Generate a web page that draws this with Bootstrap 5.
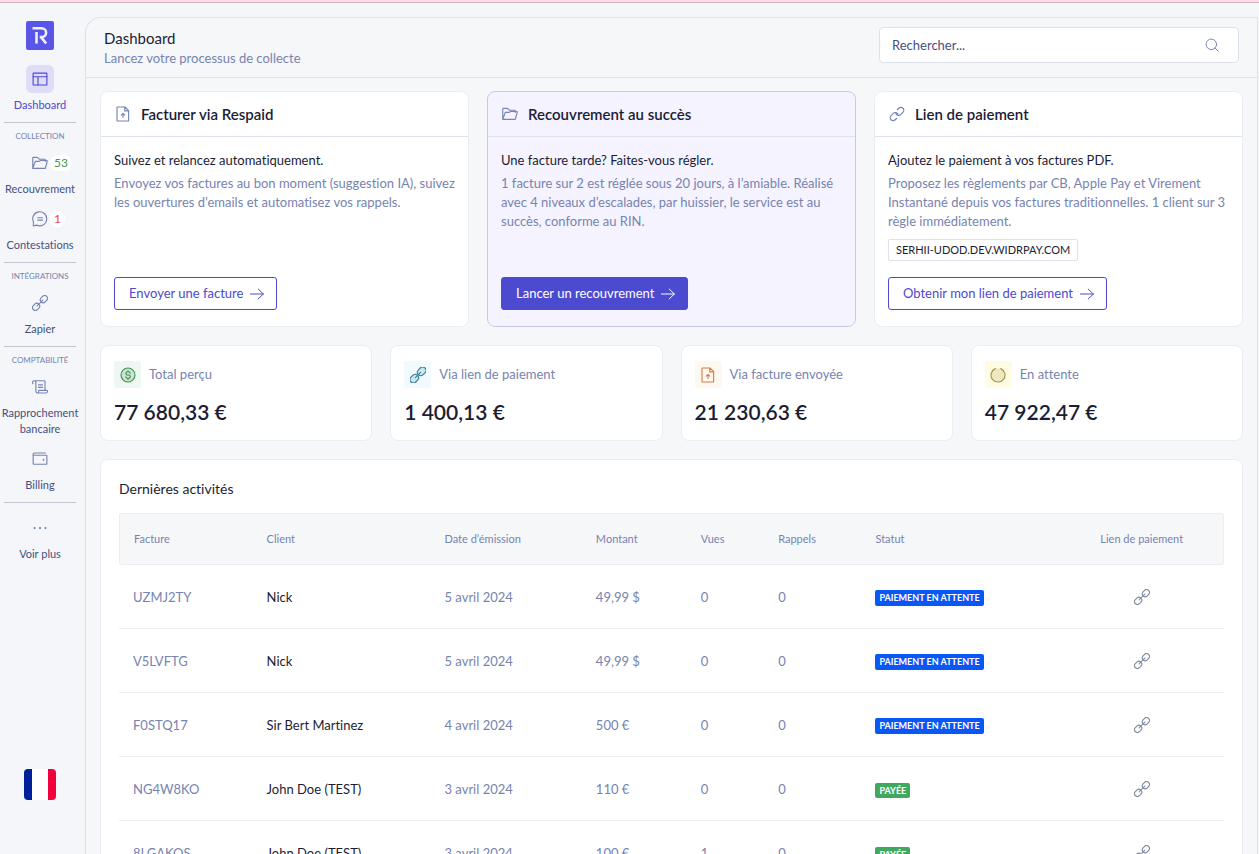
<!DOCTYPE html>
<html lang="fr">
<head>
<meta charset="utf-8">
<meta name="viewport" content="width=device-width, initial-scale=1">
<title>Dashboard</title>
<link href="https://cdn.jsdelivr.net/npm/bootstrap@5.3.0/dist/css/bootstrap.min.css" rel="stylesheet">
<style>
:root { --ink:#1c1d35; --muted:#7783b0; --slate:#46507f; --brand:#4c4acf; --line:#dfe1ed; --soft:#ebedf5; --canvas:#f6f7f9; }
body { font-family:Lato,"Liberation Sans",sans-serif; font-size:13px; line-height:19px; font-variant-ligatures:none; color:var(--ink); background:#f4f6fa; }
a { text-decoration:none; }
.ico { width:16px; height:16px; flex:none; fill:none; stroke:currentColor; stroke-width:18; stroke-linecap:round; stroke-linejoin:round; }
.ico-sm { width:14px; height:14px; }
.top-strip { height:3px; background:#ffdfe7; border-bottom:1px solid #d2b1bd; }
.side { width:80px; height:calc(100vh - 3px); padding:18px 0 54px; flex:none; top:0; }
.brand-mark { width:28px; height:29px; margin-bottom:15px; }
.side .nav-item + .nav-item { margin-top:8px; }
.side .nav-link { padding:0; font-size:11px; line-height:16px; color:var(--slate); text-align:center; }
.side .nav-link.active { color:var(--brand); }
.side-icon { height:28px; margin-bottom:4px; color:var(--muted); position:relative; }
.active .side-icon { width:28px; margin-left:auto; margin-right:auto; border-radius:6px; background:#dfdcf8; color:var(--brand); }
.side hr { margin:9px 4px 7px; border-top:1px solid #c3c7d3; opacity:1; }
.side-title { font-size:8px; line-height:12px; color:var(--muted); text-align:center; margin-bottom:7px; text-transform:uppercase; }
.count { position:absolute; left:50px; top:6px; padding:0 4px; border-radius:8px; background:#fff; font-size:12px; line-height:16px; color:#419b4a; }
.count.alert-count { color:#ec4154; }
.flag { width:32px; height:31px; border-radius:4px; border:0; padding:0; background:linear-gradient(90deg,#00209a 0 25%,#fff 25% 75%,#f0003c 75%); }
.shell { margin:14px 1px 0 5px; border:1px solid var(--line); border-bottom:0; border-radius:16px 0 0 0; background:var(--canvas); min-width:0; }
.page-head { padding:9px 18px 9px; border-bottom:1px solid var(--line); }
.page-head > * { margin-bottom:5px; }
.page-head h1 { font-size:15px; line-height:22px; margin:0; font-weight:400; }
.page-head p { margin:0; color:var(--muted); }
.search { width:360px; height:36px; border:1px solid var(--line); border-radius:4px; background:#fff; padding:0 19px 0 12px; color:var(--muted); }
.search input { border:0; outline:0; flex:1; min-width:0; font-size:13px; color:var(--slate); padding:0; }
.search input::placeholder { color:var(--slate); opacity:1; }
.content { padding:13px 14px; }
.grid-gap { --bs-gutter-x:18px; --bs-gutter-y:18px; margin-bottom:18px; }
.panel { background:#fff; border:1px solid var(--soft); border-radius:8px; }
.panel.featured { background:#f5f3ff; border-color:#cac7ef; }
.panel-title { height:45px; padding:0 14px; border-bottom:1px solid var(--line); color:var(--muted); gap:10px; }
.panel-title h2 { font-size:15px; line-height:22px; font-weight:600; color:var(--ink); margin:0; }
.panel-text { padding:14px 6px 16px 13px; }
.panel-text p { margin:0 0 4px; }
.panel-text .muted { color:var(--muted); margin-bottom:8px; }
.url-tag { border:1px solid var(--line); border-radius:2px; font-size:11px; line-height:20px; padding:0 7px; margin-bottom:16px; }
.btn.cta { --bs-btn-font-size:13px; --bs-btn-line-height:19px; --bs-btn-padding-y:6px; padding-left:14px; padding-right:12px; --bs-btn-border-radius:3px; --bs-btn-color:var(--brand); --bs-btn-border-color:var(--brand); --bs-btn-hover-bg:#eeedfb; --bs-btn-hover-color:var(--brand); gap:7px; }
.btn.cta-solid { --bs-btn-bg:var(--brand); --bs-btn-color:#fff; }
.stat { padding:15px 13px 14px; }
.stat-icon { width:27px; height:27px; border-radius:3px; }
.stat-label { color:var(--muted); }
.stat-value { font-size:21px; line-height:28px; font-weight:600; margin-top:10px; }
.t-green { background:#eff7f3; color:#3f9150; } .t-blue { background:#f0faff; color:#397f9c; }
.t-orange { background:#fff8f1; color:#cf7f4d; } .t-yellow { background:#fffce3; color:#a39443; }
.activity { padding:18px 18px 0; }
.activity h2 { font-size:14px; line-height:22px; font-weight:400; margin:0 0 13px; }
.activity table { width:100%; table-layout:fixed; border-collapse:separate; border-spacing:0; }
.activity th { height:52px; padding:0 0 2px 15px; font-size:11px; font-weight:400; color:var(--muted); background:var(--canvas); border:1px solid var(--soft); border-width:1px 0; }
.activity th:first-child { border-left-width:1px; border-radius:3px 0 0 3px; padding-left:14px; }
.activity th:last-child { border-right-width:1px; border-radius:0 3px 3px 0; }
.activity td { height:64px; padding:1px 0 0 15px; color:var(--muted); border-bottom:1px solid var(--soft); white-space:nowrap; }
.activity td:first-child { padding-left:14px; }
.activity .client { color:var(--ink); }
.activity .link-col { padding:0 0 2px; text-align:center; }
.activity a { color:#7f8ca0; }
.state { display:inline-block; vertical-align:middle; border-radius:2px; padding:0 4px; font-size:9px; line-height:16px; font-weight:700; color:#fff; background:#0a57f5; }
.state.paid { background:#41a95f; line-height:15px; }
</style>
</head>
<body>
<svg width="0" height="0" class="d-none" aria-hidden="true">
  <symbol id="i-layout" viewBox="0 0 256 256"><rect x="18" y="34" width="220" height="190" rx="10"/><path d="M18 92h220M96 92v132"/></symbol>
  <symbol id="i-folder" viewBox="0 0 256 256"><path d="M12 214V46a8 8 0 0 1 8-8h64l36 30h84a8 8 0 0 1 8 8v26M12 214l38-106a8 8 0 0 1 7-6h59l22-14h100a8 8 0 0 1 7 10l-30 110a8 8 0 0 1-7 6z"/></symbol>
  <symbol id="i-chat" viewBox="0 0 256 256"><path d="M24 176a112 112 0 1 1 52 50l-50 12a4 4 0 0 1-5-5zM92 108h76M92 146h76"/></symbol>
  <symbol id="i-chain" viewBox="0 0 256 256"><g transform="rotate(-45 128 128)"><rect x="-22" y="82" width="124" height="92" rx="46"/><rect x="154" y="82" width="124" height="92" rx="46"/><path d="M64 128h128"/></g></symbol>
  <symbol id="i-link" viewBox="0 0 256 256"><path d="M133 60l24-24a46 46 0 0 1 66 0a46 46 0 0 1 0 66l-36 36a46 46 0 0 1-66 0a46 46 0 0 1-12-30M123 196l-24 24a46 46 0 0 1-66 0a46 46 0 0 1 0-66l36-36a46 46 0 0 1 66 0a46 46 0 0 1 12 30"/></symbol>
  <symbol id="i-clasp" viewBox="0 0 256 256"><g transform="rotate(-45 128 128)"><rect x="-30" y="74" width="148" height="108" rx="54" fill="currentColor" fill-opacity=".18"/><rect x="138" y="74" width="148" height="108" rx="54" fill="currentColor" fill-opacity=".18"/><path d="M70 128h116"/></g></symbol>
  <symbol id="i-scroll" viewBox="0 0 256 256"><path d="M14 76C2 46 16 28 36 28h158a14 14 0 0 1 14 14v140M36 28c24 0 32 26 24 50M62 56v140c0 36 46 36 44 0 0-8 4-14 10-14h118c22 0 16 42-8 42H84M104 94h64M104 134h64"/></symbol>
  <symbol id="i-wallet" viewBox="0 0 256 256"><path d="M18 48v148a16 16 0 0 0 16 16h196a8 8 0 0 0 8-8V76a8 8 0 0 0-8-8H38a18 18 0 0 1 0-36h176"/><circle cx="184" cy="140" r="6" fill="currentColor"/></symbol>
  <symbol id="i-dots" viewBox="0 0 256 256"><g fill="currentColor" stroke="none"><circle cx="40" cy="128" r="18"/><circle cx="128" cy="128" r="18"/><circle cx="216" cy="128" r="18"/></g></symbol>
  <symbol id="i-file" viewBox="0 0 256 256"><path d="M216 240H40a8 8 0 0 1-8-8V24a8 8 0 0 1 8-8h120l58 58v158a8 8 0 0 1-8 8zM156 16v62h62M128 184v-62M100 146l28-28 28 28"/></symbol>
  <symbol id="i-coin" viewBox="0 0 256 256"><circle cx="128" cy="128" r="112" fill="currentColor" fill-opacity=".18"/><path d="M128 58v18M128 180v18M162 100c0-14-14-24-30-24h-8c-40 0-40 52 0 52h10c42 0 42 52 0 52h-12c-16 0-30-10-30-24"/></symbol>
  <symbol id="i-wait" viewBox="0 0 256 256"><circle cx="128" cy="128" r="108" fill="currentColor" fill-opacity=".2" stroke="none"/><path d="M84 26a112 112 0 1 0 88 0"/></symbol>
  <symbol id="i-arrow" viewBox="0 0 256 256"><path d="M8 128h236M150 38l94 90-94 90"/></symbol>
  <symbol id="i-search" viewBox="0 0 256 256"><circle cx="116" cy="116" r="96"/><path d="M186 186l56 56"/></symbol>
</svg>

<div class="top-strip"></div>
<div class="d-flex align-items-stretch">
  <nav class="side sticky-top d-flex flex-column" aria-label="Navigation principale">
    <a href="#" class="d-block mx-auto" aria-label="Respaid">
      <svg class="brand-mark d-block" viewBox="0 0 28 29"><rect width="28" height="29" rx="2" fill="#5855e8"/><path d="M6.500 7.300h9.200a4.400 4.400 0 0 1 0 8.800h-2M15 16.200l5.200 6.300M10.500 11v11.500" fill="none" stroke="#f0efff" stroke-width="2.600"/></svg>
    </a>
    <ul class="nav flex-column flex-nowrap">
      <li class="nav-item"><a class="nav-link active" href="#" aria-current="page"><span class="side-icon d-flex align-items-center justify-content-center"><svg class="ico"><use href="#i-layout"/></svg></span>Dashboard</a></li>
    </ul>
    <hr>
    <div class="side-title">Collection</div>
    <ul class="nav flex-column flex-nowrap">
      <li class="nav-item"><a class="nav-link" href="#"><span class="side-icon d-flex align-items-center justify-content-center"><svg class="ico"><use href="#i-folder"/></svg><span class="count">53</span></span>Recouvrement</a></li>
      <li class="nav-item"><a class="nav-link" href="#"><span class="side-icon d-flex align-items-center justify-content-center"><svg class="ico"><use href="#i-chat"/></svg><span class="count alert-count">1</span></span>Contestations</a></li>
    </ul>
    <hr>
    <div class="side-title">Intégrations</div>
    <ul class="nav flex-column flex-nowrap">
      <li class="nav-item"><a class="nav-link" href="#"><span class="side-icon d-flex align-items-center justify-content-center"><svg class="ico"><use href="#i-chain"/></svg></span>Zapier</a></li>
    </ul>
    <hr>
    <div class="side-title">Comptabilité</div>
    <ul class="nav flex-column flex-nowrap">
      <li class="nav-item"><a class="nav-link" href="#"><span class="side-icon d-flex align-items-center justify-content-center"><svg class="ico"><use href="#i-scroll"/></svg></span>Rapprochement bancaire</a></li>
      <li class="nav-item"><a class="nav-link" href="#"><span class="side-icon d-flex align-items-center justify-content-center"><svg class="ico"><use href="#i-wallet"/></svg></span>Billing</a></li>
    </ul>
    <hr>
    <ul class="nav flex-column flex-nowrap pt-1">
      <li class="nav-item"><a class="nav-link" href="#"><span class="side-icon d-flex align-items-center justify-content-center"><svg class="ico"><use href="#i-dots"/></svg></span>Voir plus</a></li>
    </ul>
    <button type="button" class="flag mt-auto mx-auto flex-shrink-0" aria-label="Français"></button>
  </nav>

  <main class="shell flex-grow-1">
    <header class="page-head d-flex justify-content-between align-items-start gap-3">
      <div class="mb-0">
        <h1>Dashboard</h1>
        <p>Lancez votre processus de collecte</p>
      </div>
      <label class="search d-flex align-items-center">
        <input type="search" placeholder="Rechercher..." aria-label="Rechercher">
        <svg class="ico ico-sm"><use href="#i-search"/></svg>
      </label>
    </header>

    <div class="content">
      <div class="row row-cols-1 row-cols-md-3 grid-gap">
        <div class="col"><section class="panel h-100 d-flex flex-column">
          <div class="panel-title d-flex align-items-center"><svg class="ico"><use href="#i-file"/></svg><h2>Facturer via Respaid</h2></div>
          <div class="panel-text d-flex flex-column align-items-start flex-grow-1">
            <p>Suivez et relancez automatiquement.</p>
            <p class="muted">Envoyez vos factures au bon moment (suggestion IA), suivez les ouvertures d’emails et automatisez vos rappels.</p>
            <button type="button" class="btn cta d-flex align-items-center mt-auto">Envoyer une facture <svg class="ico ico-sm"><use href="#i-arrow"/></svg></button>
          </div>
        </section></div>
        <div class="col"><section class="panel featured h-100 d-flex flex-column">
          <div class="panel-title d-flex align-items-center"><svg class="ico"><use href="#i-folder"/></svg><h2>Recouvrement au succès</h2></div>
          <div class="panel-text d-flex flex-column align-items-start flex-grow-1">
            <p>Une facture tarde? Faites-vous régler.</p>
            <p class="muted">1 facture sur 2 est réglée sous 20 jours, à l’amiable. Réalisé avec 4 niveaux d’escalades, par huissier, le service est au succès, conforme au RIN.</p>
            <button type="button" class="btn cta cta-solid d-flex align-items-center mt-auto">Lancer un recouvrement <svg class="ico ico-sm"><use href="#i-arrow"/></svg></button>
          </div>
        </section></div>
        <div class="col"><section class="panel h-100 d-flex flex-column">
          <div class="panel-title d-flex align-items-center"><svg class="ico"><use href="#i-link"/></svg><h2>Lien de paiement</h2></div>
          <div class="panel-text d-flex flex-column align-items-start flex-grow-1">
            <p>Ajoutez le paiement à vos factures PDF.</p>
            <p class="muted">Proposez les règlements par CB, Apple Pay et Virement Instantané depuis vos factures traditionnelles. 1 client sur 3 règle immédiatement.</p>
            <span class="url-tag">SERHII-UDOD.DEV.WIDRPAY.COM</span>
            <button type="button" class="btn cta d-flex align-items-center mt-auto">Obtenir mon lien de paiement <svg class="ico ico-sm"><use href="#i-arrow"/></svg></button>
          </div>
        </section></div>
      </div>

      <div class="row row-cols-2 row-cols-md-4 grid-gap">
        <div class="col"><div class="panel stat">
          <div class="d-flex align-items-center gap-2"><span class="stat-icon t-green d-flex align-items-center justify-content-center"><svg class="ico"><use href="#i-coin"/></svg></span><span class="stat-label">Total perçu</span></div>
          <div class="stat-value">77 680,33 €</div>
        </div></div>
        <div class="col"><div class="panel stat">
          <div class="d-flex align-items-center gap-2"><span class="stat-icon t-blue d-flex align-items-center justify-content-center"><svg class="ico"><use href="#i-clasp"/></svg></span><span class="stat-label">Via lien de paiement</span></div>
          <div class="stat-value">1 400,13 €</div>
        </div></div>
        <div class="col"><div class="panel stat">
          <div class="d-flex align-items-center gap-2"><span class="stat-icon t-orange d-flex align-items-center justify-content-center"><svg class="ico"><use href="#i-file"/></svg></span><span class="stat-label">Via facture envoyée</span></div>
          <div class="stat-value">21 230,63 €</div>
        </div></div>
        <div class="col"><div class="panel stat">
          <div class="d-flex align-items-center gap-2"><span class="stat-icon t-yellow d-flex align-items-center justify-content-center"><svg class="ico"><use href="#i-wait"/></svg></span><span class="stat-label">En attente</span></div>
          <div class="stat-value">47 922,47 €</div>
        </div></div>
      </div>

      <section class="panel activity">
        <h2>Dernières activités</h2>
        <table>
          <colgroup><col style="width:12%"><col style="width:16.100%"><col style="width:13.700%"><col style="width:9.500%"><col style="width:7%"><col style="width:8.800%"><col style="width:18.100%"><col></colgroup>
          <thead><tr><th>Facture</th><th>Client</th><th>Date d’émission</th><th>Montant</th><th>Vues</th><th>Rappels</th><th>Statut</th><th class="link-col">Lien de paiement</th></tr></thead>
          <tbody>
            <tr><td>UZMJ2TY</td><td class="client">Nick</td><td>5 avril 2024</td><td>49,99 $</td><td>0</td><td>0</td><td><span class="state">PAIEMENT EN ATTENTE</span></td><td class="link-col"><a href="#" aria-label="Lien de paiement"><svg class="ico"><use href="#i-chain"/></svg></a></td></tr>
            <tr><td>V5LVFTG</td><td class="client">Nick</td><td>5 avril 2024</td><td>49,99 $</td><td>0</td><td>0</td><td><span class="state">PAIEMENT EN ATTENTE</span></td><td class="link-col"><a href="#" aria-label="Lien de paiement"><svg class="ico"><use href="#i-chain"/></svg></a></td></tr>
            <tr><td>F0STQ17</td><td class="client">Sir Bert Martinez</td><td>4 avril 2024</td><td>500 €</td><td>0</td><td>0</td><td><span class="state">PAIEMENT EN ATTENTE</span></td><td class="link-col"><a href="#" aria-label="Lien de paiement"><svg class="ico"><use href="#i-chain"/></svg></a></td></tr>
            <tr><td>NG4W8KO</td><td class="client">John Doe (TEST)</td><td>3 avril 2024</td><td>110 €</td><td>0</td><td>0</td><td><span class="state paid">PAYÉE</span></td><td class="link-col"><a href="#" aria-label="Lien de paiement"><svg class="ico"><use href="#i-chain"/></svg></a></td></tr>
            <tr><td>8LGAKOS</td><td class="client">John Doe (TEST)</td><td>3 avril 2024</td><td>100 €</td><td>1</td><td>0</td><td><span class="state paid">PAYÉE</span></td><td class="link-col"><a href="#" aria-label="Lien de paiement"><svg class="ico"><use href="#i-chain"/></svg></a></td></tr>
          </tbody>
        </table>
      </section>
    </div>
  </main>
</div>
<script src="https://cdn.jsdelivr.net/npm/bootstrap@5.3.0/dist/js/bootstrap.bundle.min.js"></script>
</body>
</html>
